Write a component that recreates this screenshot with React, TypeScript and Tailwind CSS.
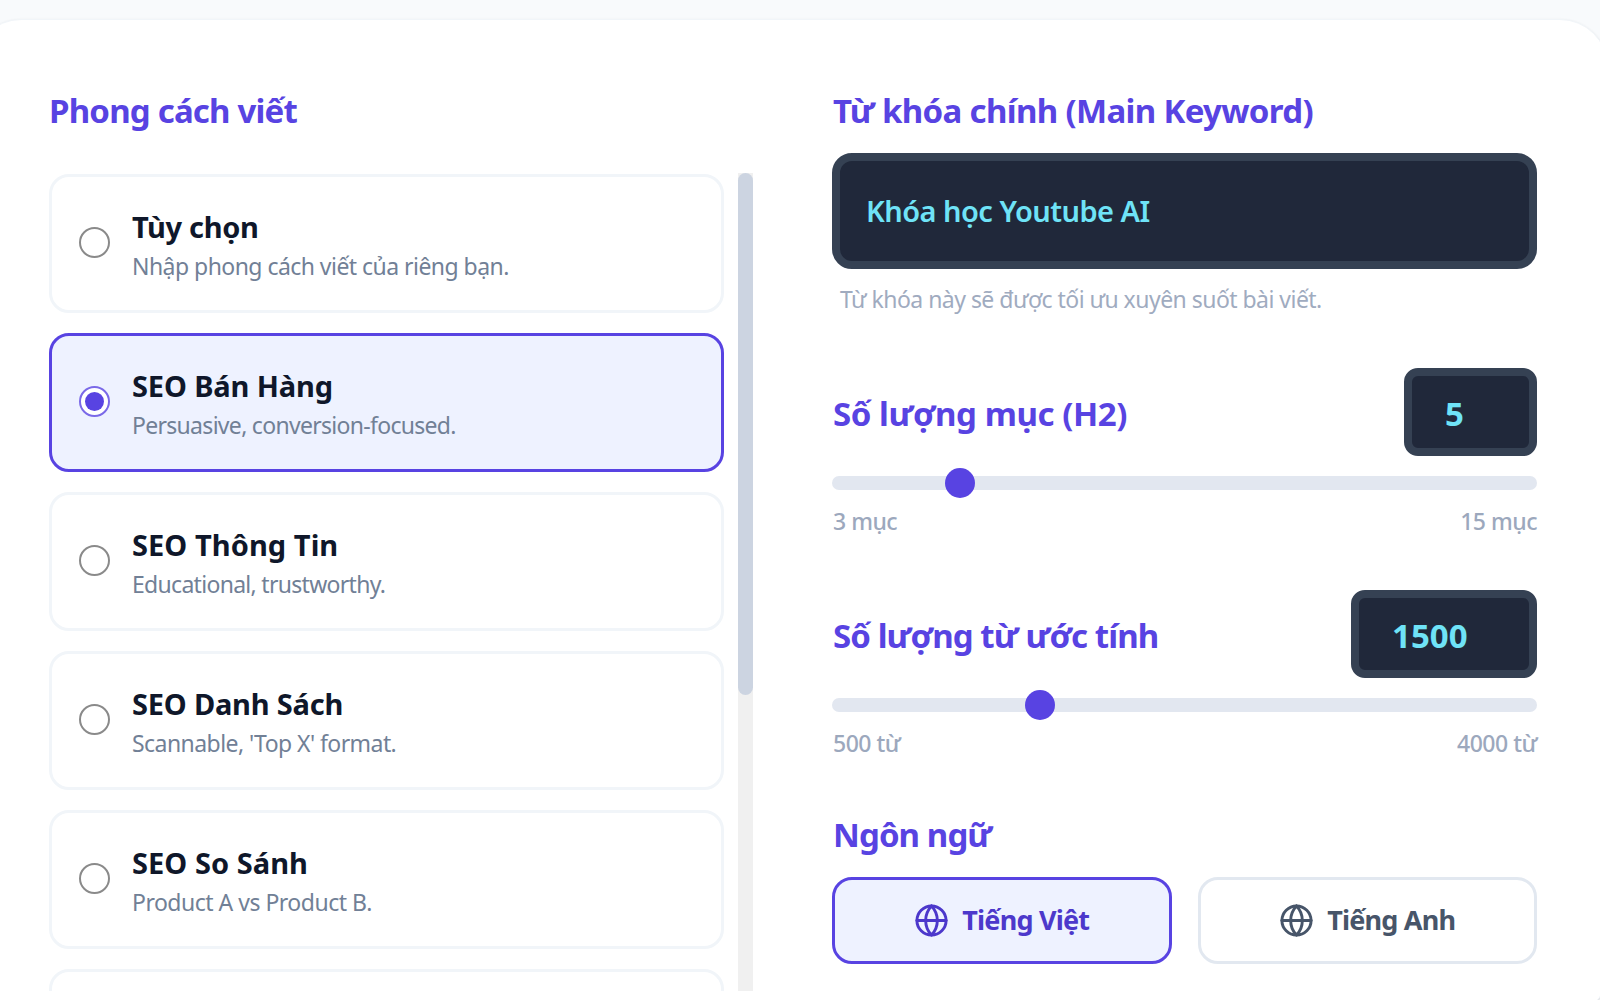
import { useState } from 'react';
import { Globe } from 'lucide-react';
import clsx from 'clsx';

const STYLES = [
  { id: 'custom', name: 'Tùy chọn', desc: 'Nhập phong cách viết của riêng bạn.', nameClass: 'tracking-[-0.3px]', descClass: 'tracking-[-0.54px]' },
  { id: 'sales', name: 'SEO Bán Hàng', desc: 'Persuasive, conversion-focused.', nameClass: 'tracking-[-0.13px]', descClass: 'tracking-[-0.7px]' },
  { id: 'info', name: 'SEO Thông Tin', desc: 'Educational, trustworthy.', nameClass: 'tracking-[0.07px]', descClass: 'tracking-[-0.7px]' },
  { id: 'list', name: 'SEO Danh Sách', desc: "Scannable, 'Top X' format.", nameClass: 'tracking-[-0.2px]', descClass: 'tracking-[-0.56px]' },
  { id: 'compare', name: 'SEO So Sánh', desc: 'Product A vs Product B.', nameClass: 'tracking-[0.05px]', descClass: 'tracking-[-0.5px]' },
];

const LANGUAGES = [
  { id: 'vi', name: 'Tiếng Việt' },
  { id: 'en', name: 'Tiếng Anh' },
];

function Heading({ children, className }: { children: React.ReactNode; className: string }) {
  return (
    <h2 className={clsx('text-[33px] leading-[46px] font-bold text-[#5843e2] whitespace-nowrap', className)}>
      {children}
    </h2>
  );
}

function Radio({ checked }: { checked: boolean }) {
  return (
    <span
      className={clsx(
        'mb-[2px] flex size-[31px] shrink-0 items-center justify-center rounded-full border-2 bg-white',
        checked ? 'border-[#7a69e8]' : 'border-[#8a8a8a]'
      )}
    >
      {checked && <span className="size-[19px] rounded-full bg-[#5843e2]" />}
    </span>
  );
}

type SliderProps = {
  label: string;
  value: string;
  left: number;
  min: string;
  max: string;
  labelClass: string;
  boxClass: string;
};

function SliderField({ label, value, left, min, max, labelClass, boxClass }: SliderProps) {
  return (
    <div>
      <div className="flex h-[88px] items-center justify-between">
        <Heading className={clsx('pt-[3px] pl-px', labelClass)}>{label}</Heading>
        <div
          className={clsx(
            'flex h-[88px] items-center rounded-[14px] border-8 border-[#354153] bg-[#20283a] pt-[3px] pl-[33px] text-[33px] font-bold text-[#6fe3f7]',
            boxClass
          )}
        >
          {value}
        </div>
      </div>
      <div className="relative mt-5 h-[14px] rounded-full bg-[#e2e7f0]">
        <span className="absolute -top-2 size-[30px] rounded-full bg-[#5843e2]" style={{ left }} />
      </div>
      <div className="mt-[15px] flex justify-between pb-px pl-px text-[23px] leading-8 font-medium tracking-[-0.5px] text-[#9ca8bd]">
        <span>{min}</span>
        <span>{max}</span>
      </div>
    </div>
  );
}

export default function App() {
  const [style, setStyle] = useState('sales');
  const [lang, setLang] = useState('vi');

  return (
    <div className="h-[1000px] w-[1600px] overflow-hidden bg-[#f8fafc] pt-[19px] font-['Noto_Sans',sans-serif]">
      <div className="-ml-[27px] flex h-[1000px] w-[1635px] rounded-[48px] border border-[#f1f5f9] bg-white pl-[75px] shadow-sm">
        {/* Writing styles */}
        <div className="flex w-[704px] flex-col pt-[68px]">
          <Heading className="tracking-[-0.8px]">Phong cách viết</Heading>
          <div className="mt-[39px] flex h-[818px] justify-between overflow-hidden">
            <div className="flex w-[675px] flex-col gap-[20.3px] pt-[1px]">
              {STYLES.map((item) => (
                <button
                  key={item.id}
                  onClick={() => setStyle(item.id)}
                  className={clsx(
                    'flex h-[138.7px] shrink-0 items-center gap-[22px] rounded-[20px] border-[3px] pl-[27px] text-left',
                    style === item.id ? 'border-[#5843e2] bg-[#eef2ff]' : 'border-[#f1f5f9] bg-white'
                  )}
                >
                  <Radio checked={style === item.id} />
                  <span className="flex flex-col pt-[6px]">
                    <span className={clsx('text-[29px] leading-[40px] font-bold text-[#0f172a]', item.nameClass)}>
                      {item.name}
                    </span>
                    <span className={clsx('text-[23px] leading-[38px] text-[#718096]', item.descClass)}>
                      {item.desc}
                    </span>
                  </span>
                </button>
              ))}
              <div className="h-[139px] shrink-0 rounded-[20px] border-[3px] border-[#f1f5f9]" />
            </div>
            <div className="w-[15px] bg-[#f0f0f0]">
              <div className="h-[522px] rounded-full bg-[#ccd4e1]" />
            </div>
          </div>
        </div>

        {/* Settings */}
        <div className="ml-[79px] w-[705px] pt-[68px]">
          <Heading className="pl-px tracking-[-0.66px]">Từ khóa chính (Main Keyword)</Heading>
          <div className="mt-[19px] flex h-[116px] items-center rounded-[20px] border-8 border-[#354153] bg-[#20283a] pl-[26px] text-[29px] font-semibold tracking-[-0.53px] text-[#6fe3f7]">
            Khóa học Youtube AI
          </div>
          <p className="mt-[14px] pl-[8px] text-[23px] leading-8 tracking-[-0.53px] text-[#a0abbf]">
            Từ khóa này sẽ được tối ưu xuyên suốt bài viết.
          </p>

          <div className="mt-[53px] flex flex-col gap-[52px]">
            <SliderField
              label="Số lượng mục (H2)"
              value="5"
              left={113}
              min="3 mục"
              max="15 mục"
              labelClass="tracking-[-0.43px]"
              boxClass="w-[133px]"
            />
            <SliderField
              label="Số lượng từ ước tính"
              value="1500"
              left={193}
              min="500 từ"
              max="4000 từ"
              labelClass="tracking-[-0.92px]"
              boxClass="w-[186px]"
            />
          </div>

          <div className="mt-[52px]">
            <Heading className="pl-px tracking-[-0.9px]">Ngôn ngữ</Heading>
            <div className="mt-[19px] grid grid-cols-2 gap-[26px]">
              {LANGUAGES.map((item) => (
                <button
                  key={item.id}
                  onClick={() => setLang(item.id)}
                  className={clsx(
                    'flex h-[87px] items-center justify-center gap-[13px] rounded-[20px] border-[3px] text-[27px] font-bold tracking-[-0.8px]',
                    lang === item.id
                      ? 'border-[#5843e2] bg-[#eef2ff] text-[#4c38cb]'
                      : 'border-[#e2e8f0] bg-white text-[#475569]'
                  )}
                >
                  <Globe size={35} strokeWidth={2} />
                  {item.name}
                </button>
              ))}
            </div>
          </div>
        </div>
      </div>
    </div>
  );
}
